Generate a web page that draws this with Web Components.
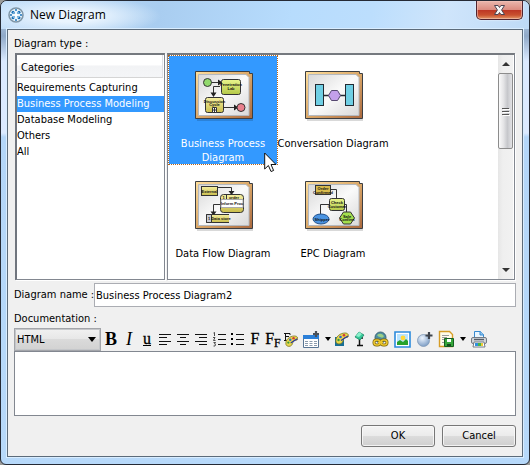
<!DOCTYPE html>
<html lang="en">
<head>
<meta charset="utf-8">
<title>New Diagram</title>
<style>
html,body{margin:0}
body{font:11px/16px "DejaVu Sans Condensed","Noto Sans",sans-serif;color:#000;background:#9a9a98}
</style>
</head>
<body>
<new-diagram-dialog></new-diagram-dialog>

<script>
const define = (name, html) => {
  const template = document.createElement('template');
  template.innerHTML = `<style>*{box-sizing:border-box}button,input,select,textarea{font:inherit;color:inherit;margin:0;border-radius:0}button{cursor:default}svg{display:block}</style>` + html;
  customElements.define(name, class extends HTMLElement {
    constructor() {
      super();
      this.attachShadow({mode: 'open'}).append(template.content.cloneNode(true));
    }
  });
};

define('title-bar', `
<style>
:host{display:flex;align-items:flex-start;height:28px;padding:0 6px 0 7px;
  background:radial-gradient(ellipse 90px 20px at 70px 15px,#e9f4fe 0 30%,transparent 100%),linear-gradient(100deg,#c3dffa 0%,#a9cdf0 30%,#b7dcfd 55%,#bcdefd 70%,#cfe5fb 84%,#bedaf6 100%)}
.logo{margin:6px 6px 0 0;flex:none}
h1{flex:1;margin:5px 0 0;font:12px/18px "Open Sans",sans-serif}
button{width:47px;height:19px;padding:0;border:1px solid #4f2430;border-top:0;border-radius:0 0 5px 5px;
  background:linear-gradient(#eab7ad,#dc8c80 48%,#bc3524 50%,#c9502f 78%,#e39a68);box-shadow:inset 0 0 0 1px #f3c3b999,0 0 2px #fff;display:grid;place-items:center}
</style>
<svg class="logo" width="16" height="16" viewBox="0 0 16 16"><circle cx="8" cy="8" r="7" fill="#eaf5fc" stroke="#7f96a7" stroke-width="1.6"/><g fill="#1d72b8"><circle cx="5" cy="5.2" r="1.5"/><circle cx="11" cy="5.2" r="1.5"/><circle cx="5" cy="10.8" r="1.5"/><circle cx="11" cy="10.8" r="1.5"/><circle cx="8" cy="3" r="1"/><circle cx="8" cy="13" r="1"/><circle cx="3" cy="8" r="1"/><circle cx="13" cy="8" r="1"/></g><path d="M5 5l6 6M11 5l-6 6" stroke="#72b1df"/><circle cx="8" cy="8" r="1.5" fill="#fff"/></svg>
<h1><slot></slot></h1>
<button aria-label="Close"><svg width="13" height="12" viewBox="0 0 13 12"><path d="M1.5 1.5h3.6l1.4 2 1.4-2h3.6L8.6 6l2.9 4.5H7.9l-1.4-2-1.4 2H1.5L4.4 6z" fill="#f6f6f6" stroke="#4c4350"/></svg></button>`);

define('category-item', `
<style>
:host{display:block}
button{display:block;width:100%;height:16px;padding:0 0 1px;border:0;background:none;text-align:left;line-height:14px;white-space:nowrap}
:host([selected]) button{background:#39f;color:#fff}
</style>
<button><slot></slot></button>`);

define('category-list', `
<style>
:host{display:flex;flex-direction:column;border:1px solid #828790;border-top:2px solid #75797f;border-left:2px solid #70757e;background:#fff;box-shadow:1px 1px #fff}
header{height:23px;margin:0 1px 2px 0;padding:5px 4px 0;background:linear-gradient(#fff 45%,#f2f3f5 50%,#f4f5f7);border-right:1px solid #dfe0e4;border-bottom:1px solid #d5d5d5}
</style>
<header><slot name="heading"></slot></header>
<slot></slot>`);

define('diagram-tile', `
<style>
:host{display:block;width:110px;height:110px}
button{display:flex;flex-direction:column;align-items:center;width:100%;height:100%;padding:15px 0 0;border:1px solid transparent;background:none;line-height:14px}
:host([selected]) button{background:#39f padding-box;color:#fff;border:1px dotted #b8651a}
.name{flex:none;width:112px;margin-top:16px;text-align:center}
</style>
<button><slot name="picture"></slot><span class="name"><slot></slot></span></button>`);

const frame = inner => `
<svg width="58" height="50" viewBox="0 0 58 50" overflow="visible">
<defs><linearGradient id="g" x2="1" y2="1"><stop stop-color="#ffdf9c"/><stop offset=".5" stop-color="#dba869"/><stop offset="1" stop-color="#a9683e"/></linearGradient>
<linearGradient id="p" x2="1" y2="1"><stop stop-color="#d8d8d8"/><stop offset=".5" stop-color="#fafafa"/><stop offset="1" stop-color="#d9d9d9"/></linearGradient>
<linearGradient id="y" x2="0" y2="1"><stop stop-color="#f5efa0"/><stop offset="1" stop-color="#c9bd4c"/></linearGradient>
<linearGradient id="l" x2="0" y2="1"><stop stop-color="#e9f58e"/><stop offset="1" stop-color="#b3c847"/></linearGradient></defs>
<path d="M3 49h56" fill="none" stroke="#000" stroke-opacity=".15" stroke-width="2"/>
<path d="M1.500 .500H55.500V2.500H58.500V47.500H1.500z" fill="url(#g)" stroke="#3c3f43"/>
<path d="M4.500 3.500H52l3 3V44.500H4.500z" fill="url(#p)" stroke="#b4b8be"/>
<g transform="translate(0 -1)">${inner}</g></svg>`;

const label = (x, y, t) => `<text x="${x}" y="${y}" text-anchor="middle" font-size="4" font-weight="bold" font-family="Liberation Sans,sans-serif" fill="#111">${t}</text>`;
const head = 'fill="#222" stroke="none"';

const pictures = {
process: frame(`<g stroke="#333" fill="none"><path d="M17 12.500h8M26 16.500h-6.500v7M30 37.500h12"/><path d="M24 9.500l4.500 3-4.500 3zM16.500 22.500h6l-3 4.500zM40 34.500l4.500 3-4.500 3z" ${head}/><circle cx="13.500" cy="12.500" r="4" fill="#91d96c"/><circle cx="47" cy="37.500" r="4" fill="#e9808d"/><rect x="27.500" y="9.500" width="19" height="15" rx="2" fill="url(#l)"/><rect x="11.500" y="27.500" width="18" height="15" rx="2" fill="url(#y)"/><path d="M18.500 37.500h4v5h-4zM20.500 37.500v5M18.500 40h4" fill="#fff"/></g>${label(37,15.5,'Penetration')}${label(37,19.5,'Lab')}${label(20.5,32.5,'Discussion')}${label(20.5,36,'Cycle')}`),
conversation: frame(`<g stroke="#222b33"><path d="M19 25.500h24" stroke-width="1.500"/><rect x="11.500" y="14.500" width="8" height="21" fill="#6fcfe4"/><rect x="41.500" y="14.500" width="8" height="21" fill="#6fcfe4"/><path d="M24.500 25.500l3-5h6l3 5-3 5h-6z" fill="#c3a0ea" stroke="#564870"/></g>`),
flow: frame(`<g stroke="#333" fill="none"><path d="M23 7.500h14.500v5M27 24.500h-7.500v8" /><path d="M34.500 11h6l-3 4zM16.500 31.500h6l-3 4z" ${head}/><rect x="7.500" y="6.500" width="16" height="9" fill="url(#y)"/><rect x="26.500" y="14.500" width="23" height="18" rx="3" fill="url(#y)"/><path d="M27 19.500h22v8H27z" fill="#fff" stroke="#aaa"/><path d="M32.500 15v4"/><path d="M35 34.500H12.500v8H35" fill="url(#y)"/><path d="M12.500 34.500h5v8h-5z" fill="#c9cbd3"/></g>${label(15.5,12.5,'External')}${label(40,18.5,'order')}${label(29.5,18.5,'1')}${label(38,25,'Inform Proc')}${label(15,40,'1')}${label(27,40,'Data store')}`),
epc: frame(`<g stroke="#333" fill="none"><path d="M26 9.500h6.500v10M26 24.500h-9.500v10M41 24.500h1.500v8"/><rect x="11.500" y="5.500" width="15" height="9" fill="#d9bb4c"/><rect x="25.500" y="18.500" width="15" height="12" rx="2" fill="url(#l)"/><ellipse cx="17" cy="39" rx="8" ry="5" fill="#4b94e2" stroke="#22508b"/><path d="M35.500 38l4-6h7l4 6-4 6h-7z" fill="#a4df4e"/></g>${label(19,9.5,'Order')}${label(19,13.5,'Confirmed')}${label(33,23.5,'Check')}${label(33,27.5,'Customer')}${label(18,40.5,'Shipper')}${label(43,37.5,'Sale')}${label(43,41,'Confirm')}`)
};

define('scroll-rail', `
<style>
:host{display:flex;flex-direction:column;width:15px;background:linear-gradient(90deg,#e6e6e6,#efefef 5px,#f1f1f1);align-items:center}
button{display:grid;place-items:center;width:15px;height:18px;padding:0;border:0;background:none}
.thumb{height:76px;border:1px solid #8c8c8c;border-radius:2px;background:linear-gradient(90deg,#fafafa,#e4e4e6 35%,#c6c7cb 65%,#e3e3e6)}
.space{flex:1}
</style>
<button aria-label="Scroll up"><svg width="8" height="4"><path d="M4 0l4 4H0z" fill="#333"/></svg></button>
<button class="thumb" aria-label="Scroll position"><svg width="8" height="9"><path d="M0 1.500h7M0 4.500h7M0 7.500h7" stroke="#555"/><path d="M1 2.500h7M1 5.500h7M1 8.500h7" stroke="#fff"/></svg></button>
<div class="space"></div>
<button aria-label="Scroll down"><svg width="8" height="4"><path d="M0 0h8L4 4z" fill="#333"/></svg></button>`);

define('diagram-gallery', `
<style>
:host{display:flex;flex:1;min-width:0;border:1px solid #828790;border-top:2px solid #75797f;background:#fff;padding-right:1px;box-shadow:1px 1px #fff}
.tiles{flex:1;display:grid;grid-template-columns:repeat(2,110px);grid-auto-rows:110px;align-content:start}
scroll-rail{flex:none}
</style>
<div class="tiles">
<diagram-tile selected><span slot="picture">${pictures.process}</span>Business Process Diagram</diagram-tile>
<diagram-tile><span slot="picture">${pictures.conversation}</span>Conversation Diagram</diagram-tile>
<diagram-tile><span slot="picture">${pictures.flow}</span>Data Flow Diagram</diagram-tile>
<diagram-tile><span slot="picture">${pictures.epc}</span>EPC Diagram</diagram-tile>
</div>
<scroll-rail></scroll-rail>`);

define('name-field', `
<style>
:host{display:flex;align-items:center;gap:4px;margin:3px 0 2px}
label{flex:none;width:76px;white-space:nowrap}
input{flex:1;min-width:0;height:24px;padding:0 1px;border:1px solid #abadb3;background:#fff}
</style>
<label for="name"><slot></slot></label><input id="name" value="Business Process Diagram2">`);

define('tool-button', `
<style>
:host{display:block;width:18px;flex:none}
:host([wide]){width:22px}
:host([arrow]){width:11px}
button{display:grid;place-items:center;width:100%;height:22px;padding:0;border:0;background:none;font:18px/20px "Liberation Serif",serif;white-space:nowrap}
</style>
<button><slot></slot></button>`);

const ico = (w, h, body) => `<svg width="${w}" height="${h}" viewBox="0 0 ${w} ${h}">${body}</svg>`;
const lines = d => ico(13, 13, `<path d="${d}" stroke="#111" fill="none"/>`);
const palette = `<path d="M1 10C0 5 5 1 10 1c3 0 4 2 3 4-1 1-3 0-4 1-1 2-1 6-5 6-1 0-3-1-3-2z" fill="#e8d84c" stroke="#7c7220" stroke-width=".8"/><circle cx="9" cy="3.3" r="1.3" fill="#d23838"/><circle cx="5.5" cy="5" r="1.3" fill="#3563ce"/><circle cx="3.5" cy="8" r="1.2" fill="#38983c"/><path d="M6 8.5L13 4" stroke="#2b3b9b" stroke-width="1.3"/>`;
const arrow = ico(6, 4, '<path d="M0 0h6L3 4z" fill="#000"/>');

define('editor-toolbar', `
<style>
:host{display:flex;align-items:center;height:24px;overflow:hidden}
.format{display:grid;flex:none;width:87px;height:23px;align-items:center;margin-right:1px}
select,.format svg{grid-area:1/1}
select{appearance:none;width:100%;height:23px;padding:1px 2px 0;border:1px solid #a3a5aa;outline:1px solid #c5c7ca;outline-offset:-2px;background:linear-gradient(#f1f1f1,#e7e7e7 48%,#dadada 50%,#d2d2d2)}
.format svg{justify-self:end;margin-right:5px;pointer-events:none}
b,i,u{display:block}
u{font-size:16px;-webkit-text-stroke:.3px #000}
sub{font-size:12px;line-height:0;vertical-align:-3px}
.f{-webkit-text-stroke:.3px #000;font-size:16px}
</style>
<div class="format"><select aria-label="Format"><option>HTML</option></select>${ico(8,5,'<path d="M0 0h8L4 5z"/>')}</div>
<tool-button><b>B</b></tool-button>
<tool-button><i>I</i></tool-button>
<tool-button><u>u</u></tool-button>
<tool-button>${lines('M0 1.500h12M0 4.500h8M0 8.500h12M0 11.500h8')}</tool-button>
<tool-button>${lines('M0 1.500h12M3 4.500h6M0 8.500h12M3 11.500h6')}</tool-button>
<tool-button>${lines('M0 1.500h12M4 4.500h8M0 8.500h12M4 11.500h8')}</tool-button>
<tool-button>${ico(13,15,'<path d="M5 2.500h8M5 7.500h8M5 12.500h8" stroke="#111"/><path d="M.5 1l1-.5V4M0 5.500h2L.5 8.500h2M.5 10.500h2l-1 1.500 1 .5-.5 1.500H.5" fill="none" stroke="#222" stroke-width=".8"/>')}</tool-button>
<tool-button>${ico(13,15,'<path d="M5 2.500h8M5 7.500h8M5 12.500h8" stroke="#111"/><path d="M0 1h2v2H0zM0 6h2v2H0zM0 11h2v2H0z"/>')}</tool-button>
<tool-button><span class="f">F</span></tool-button>
<tool-button><span class="f">F<sub>F</sub></span></tool-button>
<tool-button>${ico(14,15,`<path d="M1.500 9V1.500H6V3M1.500 4.500H5M0 1.500h2M0 8.500h3" stroke="#111" fill="none"/><g transform="translate(1 3) scale(.95)">${palette}</g>`)}</tool-button>
<tool-button wide>${ico(18,18,'<path d="M1.500 6.500h15v11h-15z" fill="#fff" stroke="#587594"/><path d="M1 5h16v4H1z" fill="#2c80d8"/><path d="M3 11.500h3M7.500 11.500h3M12 11.500h3M3 13.500h3M7.500 13.500h3M12 13.500h3M3 15.500h3M7.500 15.500h3M12 15.500h3" stroke="#8b9bad"/><path d="M14 1v6M11 4h6" stroke="#4a5058" stroke-width="2.2"/>')}</tool-button>
<tool-button arrow>${arrow}</tool-button>
<tool-button>${ico(14,15,`<path d="M0 5h9v9H0z" fill="#176e95"/>${palette}`)}</tool-button>
<tool-button>${ico(12,16,'<path d="M5.500 6v8M3 14.500h6M4 7h5" stroke="#111" stroke-width="1.5"/><path d="M5 1l5 3-4 5-5-3z" fill="#37c898" stroke="#137c5b" stroke-width=".7"/><path d="M5 1l3 2-3 3-3-1z" fill="#8af0cb"/>')}</tool-button>
<tool-button wide>${ico(17,16,'<circle cx="8.5" cy="6.5" r="5.5" fill="#4c8ea2" stroke="#3a6575"/><path d="M5 4q4-3 7 1-1 3-4 1-2 0-3-2" fill="#9bcf86"/><g fill="none" stroke="#7a6410" stroke-width="3"><rect x="2" y="9" width="6" height="5" rx="2.5"/><rect x="9" y="9" width="6" height="5" rx="2.5"/></g><g fill="none" stroke="#ecc62c" stroke-width="1.6"><rect x="2" y="9" width="6" height="5" rx="2.5"/><rect x="9" y="9" width="6" height="5" rx="2.5"/><path d="M6 11.500h5"/></g>')}</tool-button>
<tool-button wide>${ico(17,17,'<path d="M1 1h15v15H1z" fill="#fff" stroke="#2c8bdc" stroke-width="1.6"/><path d="M3 3h11v11H3z" fill="#b9e4ff"/><circle cx="9" cy="7" r="2.4" fill="#ffd83a"/><path d="M3 11l3-2 3 2 3-3 2 2v4H3z" fill="#28a22c"/>')}</tool-button>
<tool-button wide>${ico(17,17,'<defs><radialGradient id="b" cx=".4" cy=".3" r=".8"><stop stop-color="#edf5ff"/><stop offset="1" stop-color="#6f92bd"/></radialGradient></defs><circle cx="7.5" cy="9.5" r="6" fill="url(#b)" stroke="#8099b8" stroke-width=".8"/><path d="M13 1v7M9.500 4.500h7" stroke="#3e444c" stroke-width="2.2"/>')}</tool-button>
<tool-button wide>${ico(17,18,'<path d="M1.500 1.500h10l3 3v12h-13z" fill="#fffbea" stroke="#d69c25" stroke-width="1.4"/><path d="M4 5.500h7M4 7.500h5M4 9.500h2M4 12.500h2" stroke="#9b9b9b"/><path d="M6.500 8.500h9v8h-9z" fill="#36a63b" stroke="#145e20"/><path d="M9 9h4v3H9z" fill="#fff"/><path d="M9 14h4v2H9z" fill="#174d1d"/>')}</tool-button>
<tool-button arrow>${arrow}</tool-button>
<tool-button wide>${ico(18,18,'<path d="M4.500 7V1.500h6l3 3V8" fill="#eaf6ff" stroke="#388acf"/><path d="M10 1v4h4" fill="#8ec4f0" stroke="#388acf"/><rect x="1.5" y="7.5" width="15" height="6" rx="1.5" fill="#d1d5da" stroke="#737a83"/><path d="M4 9.500h10" stroke="#555d66" stroke-width="1.4"/><path d="M4 12h10l1 5H3z" fill="#fff" stroke="#737a83"/><path d="M5 13h4v3H5z" fill="#2f8fe0"/><path d="M8 13h3v3H8z" fill="#47b649"/><path d="M11 13h2v3h-2z" fill="#edca36"/>')}</tool-button>`);

define('push-button', `
<style>
:host{display:block;width:74px}
button{display:block;width:100%;height:22px;padding:0;border:1px solid #777;border-radius:3px;background:linear-gradient(#f4f4f4,#ebebeb 48%,#dcdcdc 50%,#cfcfcf);box-shadow:inset 0 0 0 1px #fafafacc}
</style>
<button><slot></slot></button>`);

define('mouse-pointer', `
<style>:host{position:absolute;left:263px;top:151px;pointer-events:none}</style>
<svg width="13" height="21" viewBox="0 0 13 21"><path d="M.7 1v16l3.7-3.5 2.6 6 2.6-1-2.6-6h5z" fill="#fff" stroke="#111"/></svg>`);

define('new-diagram-dialog', `
<style>
:host{display:flex;flex-direction:column;min-height:100vh;box-sizing:border-box;position:relative;border:1px solid #252a35;border-radius:7px 7px 6px 6px;overflow:hidden;background:linear-gradient(#cfe4fb,#8fa9c8 35px,#dbeaff 60px,#dceaff 132px,#b4d6f8 136px,#b7d9fa)}
main{flex:1;display:flex;flex-direction:column;margin:0 6px 7px;padding:6px 6px 9px;border:1px solid #5c6b7a;background:#f0f0f0;outline:1px solid #d9edff}
.caption{padding:0 0 1px}
label{padding:2px 0 0}
.panes{flex:1;display:flex;gap:2px;padding-left:1px;margin-right:1px}
category-list{flex:none;width:150px}
textarea{display:block;width:100%;height:65px;border:1px solid #828790;background:#fff;resize:none;outline:0}
footer{display:flex;justify-content:flex-end;gap:7px;margin-top:9px}
</style>
<title-bar>New Diagram</title-bar>
<main>
<div class="caption">Diagram type :</div>
<div class="panes">
<category-list><span slot="heading">Categories</span>
<category-item>Requirements Capturing</category-item><category-item selected>Business Process Modeling</category-item><category-item>Database Modeling</category-item><category-item>Others</category-item><category-item>All</category-item></category-list>
<diagram-gallery></diagram-gallery>
</div>
<name-field>Diagram name :</name-field>
<label for="doc">Documentation :</label>
<editor-toolbar></editor-toolbar>
<textarea id="doc"></textarea>
<footer><push-button>OK</push-button><push-button>Cancel</push-button></footer>
</main>
<mouse-pointer></mouse-pointer>`);
</script>
</body>
</html>
